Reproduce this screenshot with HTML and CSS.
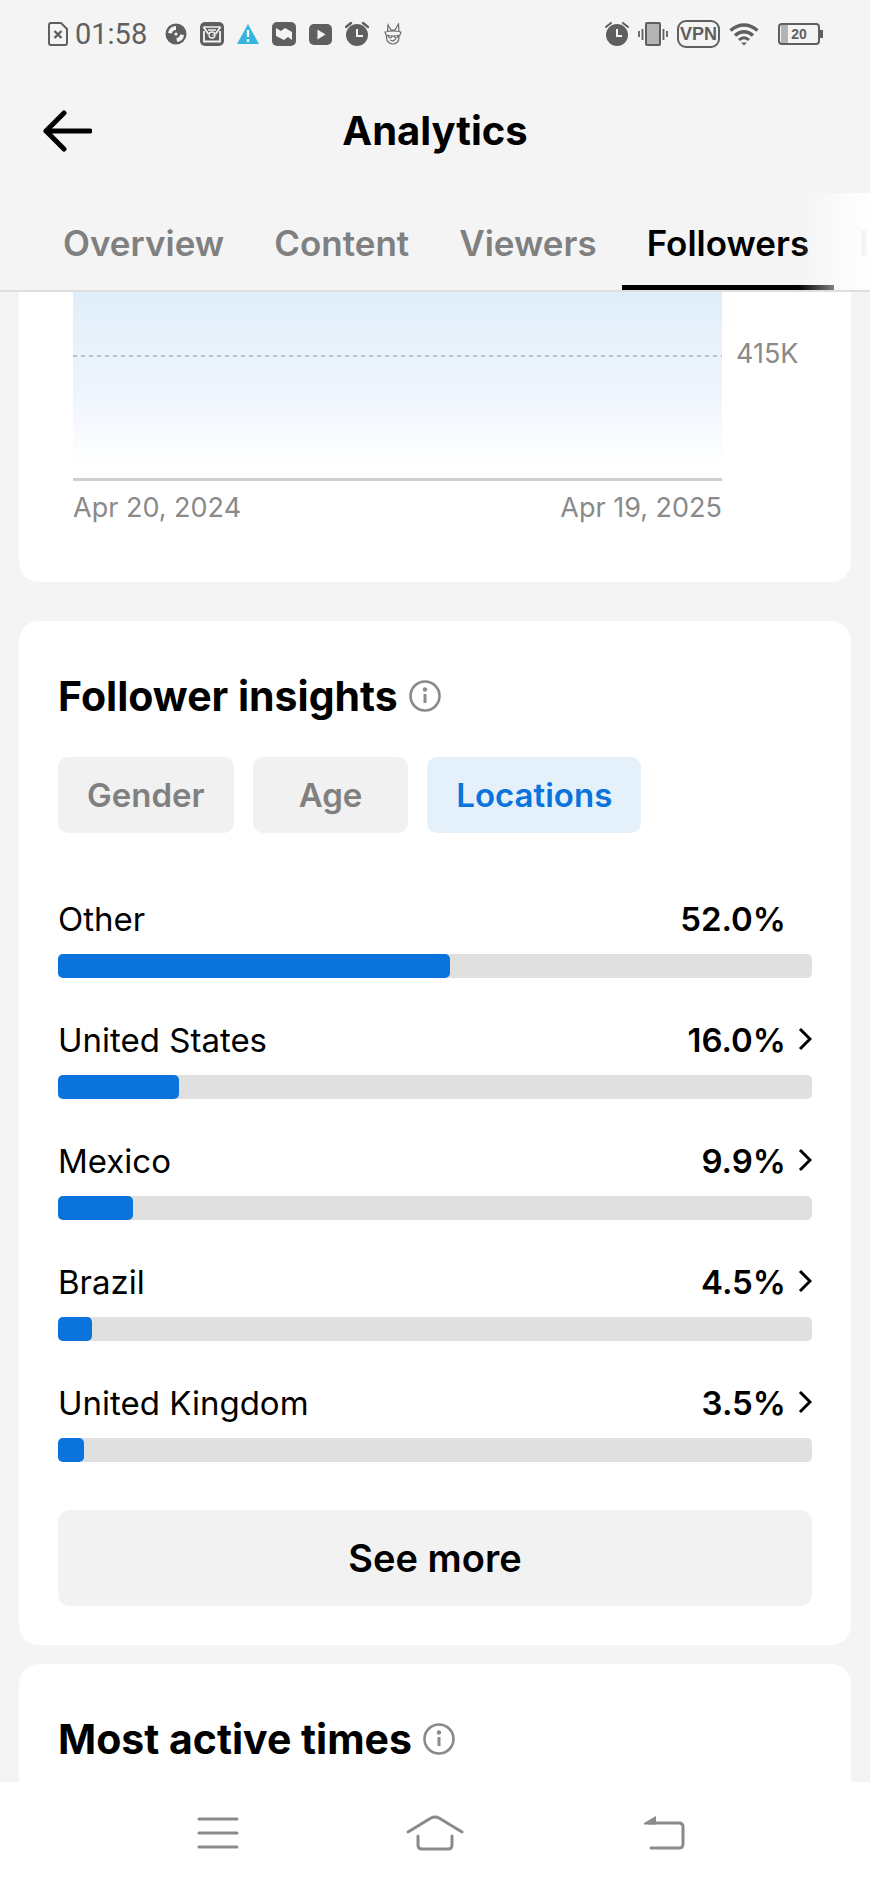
FILE: index.html
```html
<!DOCTYPE html>
<html lang="en">
<head>
<meta charset="utf-8">
<meta name="viewport" content="width=device-width, initial-scale=1">
<title>Analytics</title>
<link rel="stylesheet" href="styles.css">
</head>
<body>
<div class="screen">
  <div class="status">
    <div class="status-left">
      <svg width="20" height="24" viewBox="0 0 20 24" fill="none" stroke="#5f5f5f" stroke-width="2"><path d="M3 1h10l6 6v14a2 2 0 0 1-2 2H3a2 2 0 0 1-2-2V3a2 2 0 0 1 2-2z"/><path d="M6.500 9l7 7M13.500 9l-7 7" stroke-width="2.400"/></svg>
      <span class="clock">01:58</span>
      <div class="notes">
        <svg width="22" height="22" viewBox="0 0 22 22"><circle cx="11" cy="11" r="10.500" fill="#5f5f5f"/><path d="M11 11L11 3A8 8 0 0 0 3 10zM11 11l8 1a8 8 0 0 1-7 7z" fill="#f4f4f4"/><circle cx="11" cy="11" r="4" fill="#5f5f5f"/><circle cx="11" cy="11" r="1.600" fill="#f4f4f4"/></svg>
        <svg width="24" height="24" viewBox="0 0 24 24"><rect width="24" height="24" rx="5" fill="#5f5f5f"/><path d="M4 9v10.500h16V9M3.500 5l5 7M20.500 5l-5 7" fill="none" stroke="#f4f4f4" stroke-width="1.800"/><path d="M3.500 5h17M8 8h8" stroke="#f4f4f4" stroke-width="1.400"/><circle cx="12" cy="13" r="3" fill="none" stroke="#f4f4f4" stroke-width="1.300"/><path d="M12 13h3" stroke="#f4f4f4"/></svg>
        <svg width="22" height="20" viewBox="0 0 22 20"><path d="M11 0l11 20H0z" fill="#32b5e0"/><path d="M11 6v7M11 15v3" stroke="#fff" stroke-width="2.400"/></svg>
        <svg width="24" height="24" viewBox="0 0 24 24"><rect width="24" height="24" rx="5" fill="#5f5f5f"/><path d="M4 6l5 3 4-3 7 4v8l-4-3-4 3-8-4z" fill="#f4f4f4"/></svg>
        <svg width="23" height="21" viewBox="0 0 23 21"><rect width="23" height="21" rx="5" fill="#5f5f5f"/><path d="M8.500 5.500v10l8-5z" fill="#f4f4f4"/></svg>
        <svg width="24" height="24" viewBox="0 0 24 24"><circle cx="12" cy="13" r="11" fill="#5f5f5f"/><path d="M1 5l5-4M23 5l-5-4" stroke="#5f5f5f" stroke-width="2.400" stroke-linecap="round"/><path d="M12 7v7h6" fill="none" stroke="#f4f4f4" stroke-width="2"/></svg>
        <svg class="cat" width="18" height="22" viewBox="0 0 18 22" fill="none" stroke="#6a6a6a" stroke-width="1.200"><path d="M3.500 9L4 2l3 5h4l3.500-6 .5 8M1 9q8-2 16 0l-1 3q-7 2-14 0zM2.500 12v3c0 4 4 6 6.500 6s6-2 6-6v-3M4 13q2 4 4.500 0M9.500 13q3 4 5 0M6 17l3 1 3-2"/></svg>
      </div>
    </div>
    <div class="status-right">
      <svg width="24" height="24" viewBox="0 0 24 24"><circle cx="12" cy="13" r="11" fill="#5f5f5f"/><path d="M1 5l5-4M23 5l-5-4" stroke="#5f5f5f" stroke-width="2" stroke-linecap="round"/><path d="M12 7v7h5" fill="none" stroke="#f4f4f4" stroke-width="2"/></svg>
      <svg width="30" height="24" viewBox="0 0 30 24"><rect x="8" y="1" width="14" height="22" rx="1" fill="#b4b4b4" stroke="#5f5f5f" stroke-width="2"/><path d="M1 9v6M4.500 7v11M25.500 7v11M29 9v6" stroke="#5f5f5f" stroke-width="1.800"/></svg>
      <span class="vpn">VPN</span>
      <svg width="30" height="23" viewBox="0 0 30 23" fill="none" stroke="#5f5f5f" stroke-width="3.400"><path d="M1.500 7.500Q15-3.500 28.500 7.500"/><path d="M6 12.500Q15 5 24 12.500"/><path d="M10 17q5-4.500 10 0" stroke-width="3"/><path d="M12 19.500h6L15 22.500z" fill="#5f5f5f" stroke="none"/></svg>
      <span class="battery">20</span>
    </div>
  </div>

  <header class="header">
    <button class="back" aria-label="Back"><svg width="50" height="42" viewBox="0 0 50 42" fill="none" stroke="#000" stroke-width="5" stroke-linecap="round" stroke-linejoin="round"><path d="M22 3L4 21l18 18M4 21h44"/></svg></button>
    <h1 class="title">Analytics</h1>
  </header>

  <nav class="tabs">
    <a class="tab" href="#overview">Overview</a>
    <a class="tab" href="#content">Content</a>
    <a class="tab" href="#viewers">Viewers</a>
    <a class="tab tab-on" href="#followers" aria-current="page">Followers</a>
    <a class="tab" href="#live">LIVE</a>
  </nav>

  <main class="content">
    <section class="card card-chart">
      <div class="chart">
        <div class="plot"></div>
        <span class="tick">415K</span>
      </div>
      <div class="dates"><span>Apr 20, 2024</span><span>Apr 19, 2025</span></div>
    </section>

    <section class="card card-insights">
      <h2 class="heading">Follower insights
        <svg width="32" height="32" viewBox="0 0 32 32"><circle cx="16" cy="16" r="14.500" fill="none" stroke="#8a8a8a" stroke-width="2.600"/><circle cx="16" cy="9.500" r="2.200" fill="#8a8a8a"/><path d="M16 14v9" stroke="#8a8a8a" stroke-width="3"/></svg>
      </h2>
      <div class="chips">
        <button class="chip">Gender</button>
        <button class="chip chip-wide">Age</button>
        <button class="chip chip-on" aria-pressed="true">Locations</button>
      </div>
      <ul class="places">
        <li><div class="place"><span>Other</span><span class="share">52.0%</span></div><div class="track"><div class="fill" style="width:52%"></div></div></li>
        <li><a class="place" href="#us"><span>United States</span><span class="share">16.0%</span><svg class="chev" viewBox="0 0 14 24"><path d="M2 2l10 10L2 22"/></svg></a><div class="track"><div class="fill" style="width:16%"></div></div></li>
        <li><a class="place" href="#mx"><span>Mexico</span><span class="share">9.9%</span><svg class="chev" viewBox="0 0 14 24"><path d="M2 2l10 10L2 22"/></svg></a><div class="track"><div class="fill" style="width:9.9%"></div></div></li>
        <li><a class="place" href="#br"><span>Brazil</span><span class="share">4.5%</span><svg class="chev" viewBox="0 0 14 24"><path d="M2 2l10 10L2 22"/></svg></a><div class="track"><div class="fill" style="width:4.5%"></div></div></li>
        <li><a class="place" href="#gb"><span>United Kingdom</span><span class="share">3.5%</span><svg class="chev" viewBox="0 0 14 24"><path d="M2 2l10 10L2 22"/></svg></a><div class="track"><div class="fill" style="width:3.5%"></div></div></li>
      </ul>
      <button class="more">See more</button>
    </section>

    <section class="card card-times">
      <h2 class="heading">Most active times
        <svg width="32" height="32" viewBox="0 0 32 32"><circle cx="16" cy="16" r="14.500" fill="none" stroke="#8a8a8a" stroke-width="2.600"/><circle cx="16" cy="9.500" r="2.200" fill="#8a8a8a"/><path d="M16 14v9" stroke="#8a8a8a" stroke-width="3"/></svg>
      </h2>
    </section>
  </main>

  <div class="navbar">
    <button class="nav-btn" aria-label="Recent apps"><svg width="42" height="34" viewBox="0 0 42 34" stroke="#8a8a8a" stroke-width="3" stroke-linecap="round"><path d="M2 3h38M2 17h38M2 31h38"/></svg></button>
    <button class="nav-btn" aria-label="Home"><svg width="58" height="36" viewBox="0 0 58 36" fill="none" stroke="#8a8a8a" stroke-width="3" stroke-linecap="round"><path d="M2 17L25 3q4-2 8 0L56 17M12 21v9q0 4 4 4h26q4 0 4-4V21"/></svg></button>
    <button class="nav-btn nav-back" aria-label="Back"><svg width="42" height="36" viewBox="0 0 42 36" fill="none" stroke="#8a8a8a" stroke-width="3" stroke-linecap="round"><path d="M6 8h30q4 0 4 4v17q0 4-4 4H8"/><path d="M13 1v8.500H1V8z" fill="#8a8a8a" stroke="none"/></svg></button>
  </div>
</div>
</body>
</html>
```
FILE: styles.css
```css
* { box-sizing: border-box; }
body { margin: 0; background: #f4f4f4; color: #000; font-family: Inter, "Liberation Sans", sans-serif; }
button { border: 0; padding: 0; margin: 0; background: none; font: inherit; color: inherit; }
a { color: inherit; text-decoration: none; }
svg { display: block; flex: none; }

.screen { height: 100vh; display: flex; flex-direction: column; overflow: hidden; }

.status { flex: none; height: 68px; padding: 0 50px 0 48px; display: flex; justify-content: space-between; align-items: center; color: #5f5f5f; }
.status-left, .status-right { display: flex; align-items: center; }
.clock { font: 29px/32px Roboto, sans-serif; margin-left: 7px; }
.notes { display: flex; align-items: center; gap: 13px; margin-left: 18px; }
.cat { margin-left: 2px; }
.status-right { gap: 9px; }
.vpn { border: 2px solid #5f5f5f; border-radius: 9px; width: 43px; height: 28px; font: bold 18px/24px "Liberation Sans", sans-serif; text-align: center; }
.battery { position: relative; width: 42px; height: 22px; margin-left: 10px; border: 2px solid #5f5f5f; border-radius: 4px; font: bold 14px/18px "Liberation Sans", sans-serif; text-align: center; background: linear-gradient(90deg, transparent 1px, #b4b4b4 1px, #b4b4b4 8px, transparent 8px); }
.battery::after { content: ""; position: absolute; right: -5px; top: 5px; width: 3px; height: 8px; background: #5f5f5f; }

.header { flex: none; height: 125px; padding: 0 42px; display: grid; grid-template-columns: 50px 1fr 50px; align-items: center; }
.title { margin: 0; text-align: center; font-size: 40px; line-height: 48px; font-weight: 700; }

.tabs { position: relative; flex: none; height: 99px; padding-left: 38px; display: flex; overflow: hidden; border-bottom: 2px solid #dedede; }
.tabs::after { content: ""; position: absolute; top: 0; right: 0; bottom: 0; width: 72px; background: linear-gradient(90deg, rgba(255,255,255,0), #fff); }
.tab { flex: none; padding: 0 25px; line-height: 100px; font-size: 35px; font-weight: 600; color: #808080; }
.tab-on { color: #000; border-bottom: 5px solid #000; }

.content { flex: 1; min-height: 0; overflow: hidden; padding: 0 19px; display: flex; flex-direction: column; }
.card { flex: none; background: #fff; border-radius: 20px; }
.card-chart { border-top-left-radius: 0; border-top-right-radius: 0; padding: 0 39px 58px 54px; margin-bottom: 39px; }
.chart { display: flex; gap: 14px; }
.plot { flex: 1; height: 189px; border-bottom: 3px solid #cfcfcf; background: repeating-linear-gradient(90deg, #b9c3cc 0 4px, transparent 4px 8px) 0 63px / 100% 2px no-repeat, linear-gradient(#e0eef9, #eff5fd 55%, #fff 95%); }
.tick { width: 76px; padding-top: 46px; }
.tick, .dates { font-size: 27px; line-height: 32px; color: #8a8a8a; }
.dates { display: flex; justify-content: space-between; margin: 11px 90px 0 0; }

.card-insights { padding: 51px 39px 39px; margin-bottom: 19px; }
.card-times { padding: 51px 39px; }
.heading { margin: 0; display: flex; align-items: center; gap: 11px; font-size: 41px; line-height: 48px; font-weight: 700; }
.chips { display: flex; gap: 19px; margin-top: 37px; }
.chip { height: 76px; padding: 0 29px; border-radius: 10px; background: #f1f1f1; color: #808080; font-size: 33px; font-weight: 600; }
.chip-wide { padding: 0 46px; }
.chip-on { background: #e4f1fb; color: #0a74dc; }

.places { list-style: none; margin: 65px 0 48px; padding: 0; display: flex; flex-direction: column; gap: 41px; }
.place { position: relative; display: flex; justify-content: space-between; padding-right: 26px; font-size: 33px; line-height: 42px; }
.share { font-weight: 600; }
.chev { position: absolute; right: 0; top: 8px; width: 14px; height: 24px; fill: none; stroke: #000; stroke-width: 3; }
.track { margin-top: 14px; height: 24px; border-radius: 5px; background: #e0e0e0; }
.fill { height: 24px; border-radius: 5px; background: #0a74dc; }
.more { display: block; width: 100%; height: 96px; border-radius: 12px; background: #f2f2f2; font-size: 38px; font-weight: 600; }

.navbar { flex: none; height: 102px; padding: 0 109px; display: grid; grid-template-columns: repeat(3, 1fr); background: #fff; }
.nav-btn { display: grid; place-items: center; }
.nav-back { padding-left: 24px; }
```
